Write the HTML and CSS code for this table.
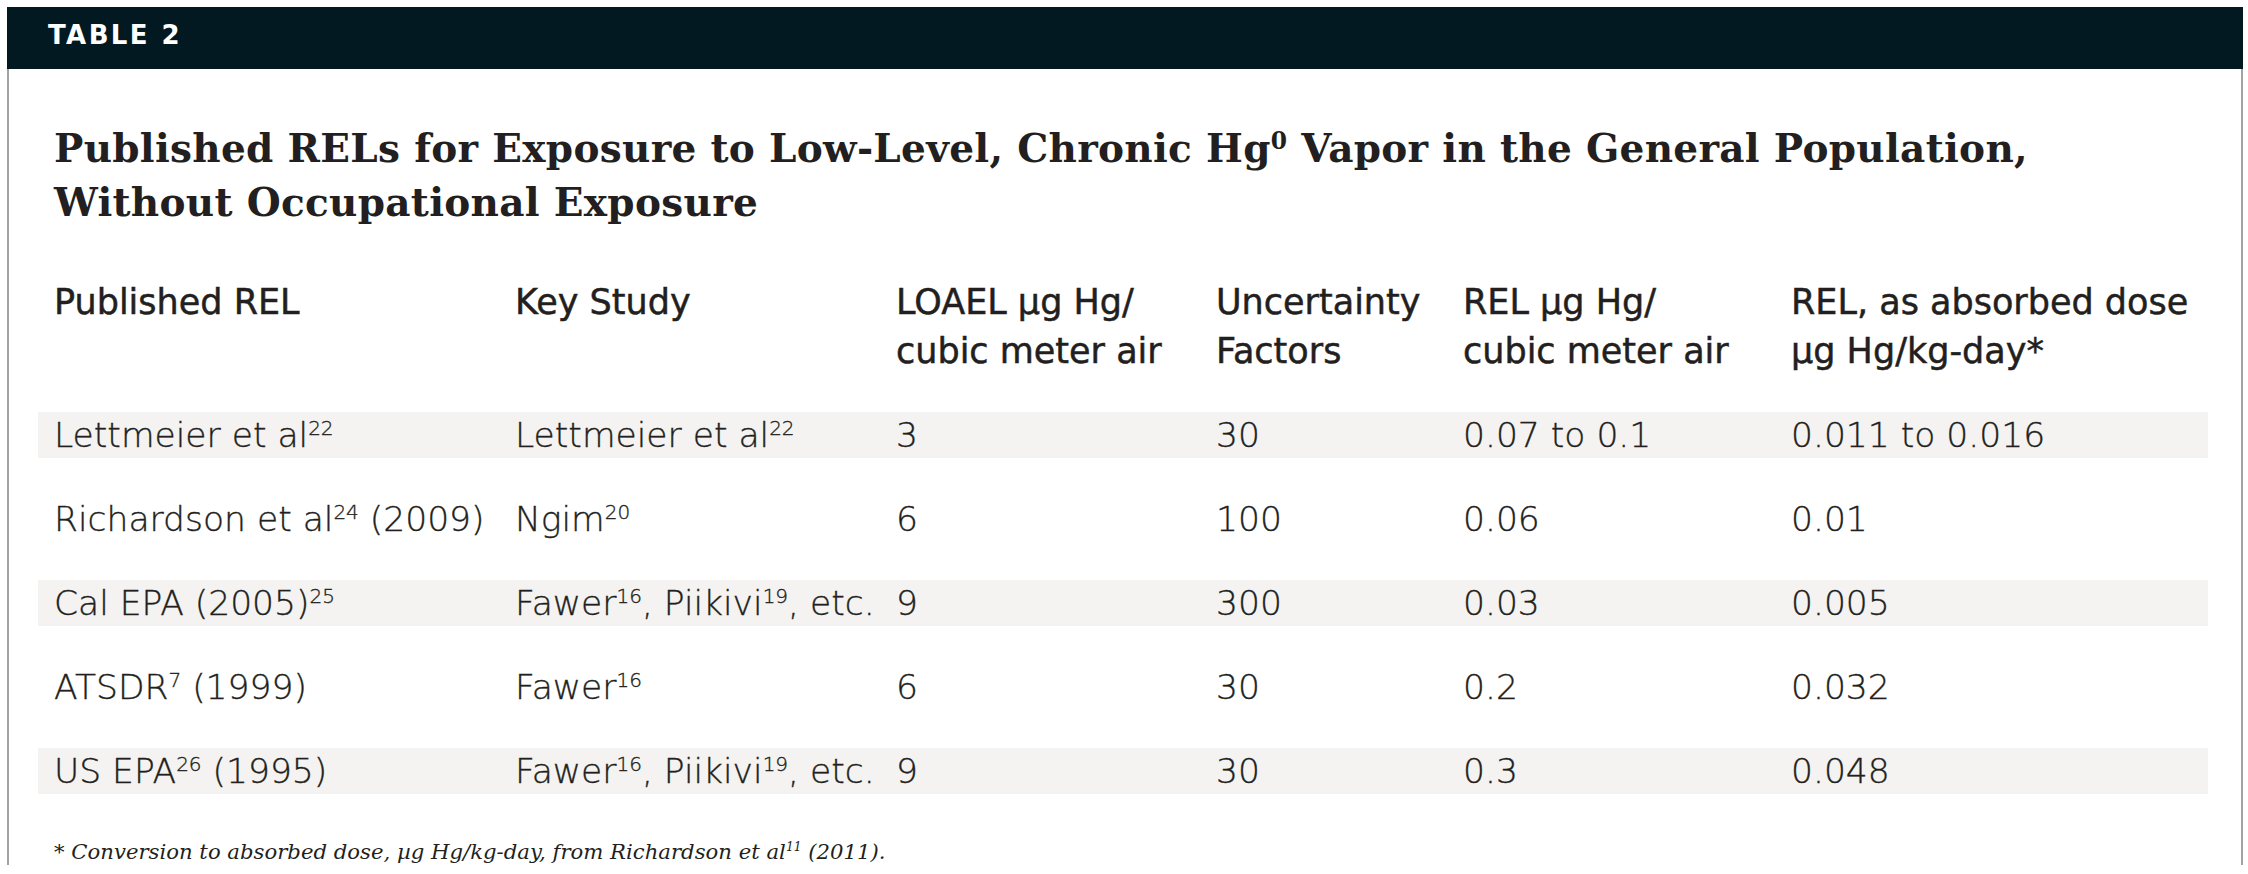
FILE: index.html
```html
<!DOCTYPE html>
<html lang="en">
<head>
<meta charset="utf-8">
<title>Table 2</title>
<link rel="stylesheet" href="styles.css">
</head>
<body>
<div class="card">
  <div class="card-head">TABLE 2</div>
  <div class="card-body">
    <h1 class="title">Published RELs for Exposure to Low-Level, Chronic Hg<sup>0</sup> Vapor in the General Population,<br>Without Occupational Exposure</h1>
    <div class="table">
      <div class="row head">
        <div class="cell">Published REL</div>
        <div class="cell">Key Study</div>
        <div class="cell">LOAEL µg Hg/<br>cubic meter air</div>
        <div class="cell">Uncertainty<br>Factors</div>
        <div class="cell">REL µg Hg/<br>cubic meter air</div>
        <div class="cell">REL, as absorbed dose<br>µg Hg/kg-day*</div>
      </div>
      <div class="rows">
        <div class="row data shade">
          <div class="cell">Lettmeier et al<sup>22</sup></div>
          <div class="cell">Lettmeier et al<sup>22</sup></div>
          <div class="cell">3</div>
          <div class="cell">30</div>
          <div class="cell">0.07 to 0.1</div>
          <div class="cell">0.011 to 0.016</div>
        </div>
        <div class="row data">
          <div class="cell">Richardson et al<sup>24</sup> (2009)</div>
          <div class="cell">Ngim<sup>20</sup></div>
          <div class="cell">6</div>
          <div class="cell">100</div>
          <div class="cell">0.06</div>
          <div class="cell">0.01</div>
        </div>
        <div class="row data shade">
          <div class="cell">Cal EPA (2005)<sup>25</sup></div>
          <div class="cell">Fawer<sup>16</sup>, Piikivi<sup>19</sup>, etc.</div>
          <div class="cell">9</div>
          <div class="cell">300</div>
          <div class="cell">0.03</div>
          <div class="cell">0.005</div>
        </div>
        <div class="row data">
          <div class="cell">ATSDR<sup>7</sup> (1999)</div>
          <div class="cell">Fawer<sup>16</sup></div>
          <div class="cell">6</div>
          <div class="cell">30</div>
          <div class="cell">0.2</div>
          <div class="cell">0.032</div>
        </div>
        <div class="row data shade">
          <div class="cell">US EPA<sup>26</sup> (1995)</div>
          <div class="cell">Fawer<sup>16</sup>, Piikivi<sup>19</sup>, etc.</div>
          <div class="cell">9</div>
          <div class="cell">30</div>
          <div class="cell">0.3</div>
          <div class="cell">0.048</div>
        </div>
      </div>
    </div>
    <p class="note">* Conversion to absorbed dose, µg Hg/kg-day, from Richardson et al<sup>11</sup> (2011).</p>
  </div>
</div>
</body>
</html>
```
FILE: styles.css
```css
html, body {
  margin: 0;
  background: #ffffff;
}

body {
  color: #231f20;
  font-family: "DejaVu Sans", sans-serif;
}

.card {
  margin: 7px 0 0 7px;
  width: 2236px;
}

.card-head {
  background: #021922;
  color: #ffffff;
  font-family: "DejaVu Sans", sans-serif;
  font-weight: 700;
  font-size: 26px;
  line-height: 57px;
  letter-spacing: 2.4px;
  padding: 0 0 5px 41px;
}

.card-body {
  box-sizing: border-box;
  height: 796px;
  border-left: 2px solid #a3a3a3;
  border-right: 2px solid #a3a3a3;
  padding: 52px 33px 0 29px;
}

.title {
  margin: 0 0 0 16px;
  font-family: "DejaVu Serif", serif;
  font-weight: 700;
  font-size: 39px;
  line-height: 54px;
  letter-spacing: 0.3px;
  color: #231f20;
}

.title sup {
  font-size: 60%;
  line-height: 0;
  vertical-align: 0.55em;
}

.table {
  margin-top: 49px;
}

.row {
  display: grid;
  grid-template-columns: 461px 381px 320px 247px 328px 1fr;
}

.cell {
  padding-left: 16px;
  white-space: nowrap;
}

.head {
  font-size: 35px;
  line-height: 49px;
  font-weight: 400;
  -webkit-text-stroke: 0.5px #231f20;
  margin-bottom: 36px;
}

.rows {
  display: flex;
  flex-direction: column;
  gap: 38px;
}

.data {
  height: 46px;
  font-size: 34.5px;
  line-height: 46px;
  font-weight: 300;
  -webkit-text-stroke: 0.35px #231f20;
}

.shade {
  background: #f4f3f1;
}

.data sup,
.note sup {
  font-size: 58%;
  line-height: 0;
  vertical-align: 0.62em;
}

.note {
  margin: 43px 0 0 16px;
  font-family: "DejaVu Serif", serif;
  font-style: italic;
  font-size: 21.2px;
  line-height: 30px;
}
```
